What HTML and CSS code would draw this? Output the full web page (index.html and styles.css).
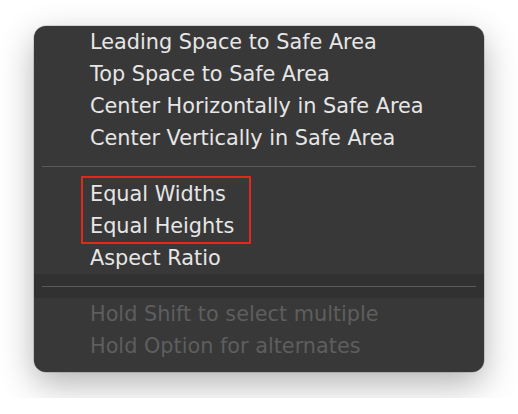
FILE: index.html
```html
<!DOCTYPE html>
<html lang="en">
<head>
<meta charset="utf-8">
<title>Constraints menu</title>
<link rel="stylesheet" href="styles.css">
</head>
<body>
<div class="stage">
  <div class="menu">
    <div class="section">
      <div class="item">Leading Space to Safe Area</div>
      <div class="item">Top Space to Safe Area</div>
      <div class="item">Center Horizontally in Safe Area</div>
      <div class="item">Center Vertically in Safe Area</div>
    </div>
    <div class="separator"><div class="line"></div></div>
    <div class="section">
      <div class="highlight-group">
        <div class="item">Equal Widths</div>
        <div class="item">Equal Heights</div>
      </div>
      <div class="item">Aspect Ratio</div>
    </div>
    <div class="separator band"><div class="line"></div></div>
    <div class="section">
      <div class="item disabled">Hold Shift to select multiple</div>
      <div class="item disabled">Hold Option for alternates</div>
    </div>
  </div>
</div>
</body>
</html>
```
FILE: styles.css
```css
html, body {
  margin: 0;
  padding: 0;
  background: #ffffff;
}

.stage {
  padding: 26px 34px;
}

.menu {
  width: 450px;
  background: #383838;
  border-radius: 12px;
  padding: 0 0 10px 0;
  box-shadow: 0 12px 34px rgba(0, 0, 0, 0.30), 0 0 0 0.5px rgba(0, 0, 0, 0.25);
  font-family: "DejaVu Sans", "Liberation Sans", sans-serif;
  font-size: 20.8px;
  color: #e6e6e6;
  overflow: hidden;
}

.section {
  display: flex;
  flex-direction: column;
}

.item {
  height: 32px;
  line-height: 32px;
  padding-left: 56px;
  white-space: nowrap;
}

.item.disabled {
  color: #5e5e5e;
}

.highlight-group {
  align-self: flex-start;
  margin-left: 49px;
  width: 166px;
  box-sizing: border-box;
  padding-left: 7px;
  outline: 2px solid #e3271d;
}

.highlight-group .item {
  padding-left: 0;
}

.separator {
  height: 24px;
  display: flex;
  align-items: center;
  padding: 0 8px;
}

.separator.band {
  background: #313131;
}

.line {
  flex: 1;
  height: 1px;
  background: #5a5a5a;
}
```
